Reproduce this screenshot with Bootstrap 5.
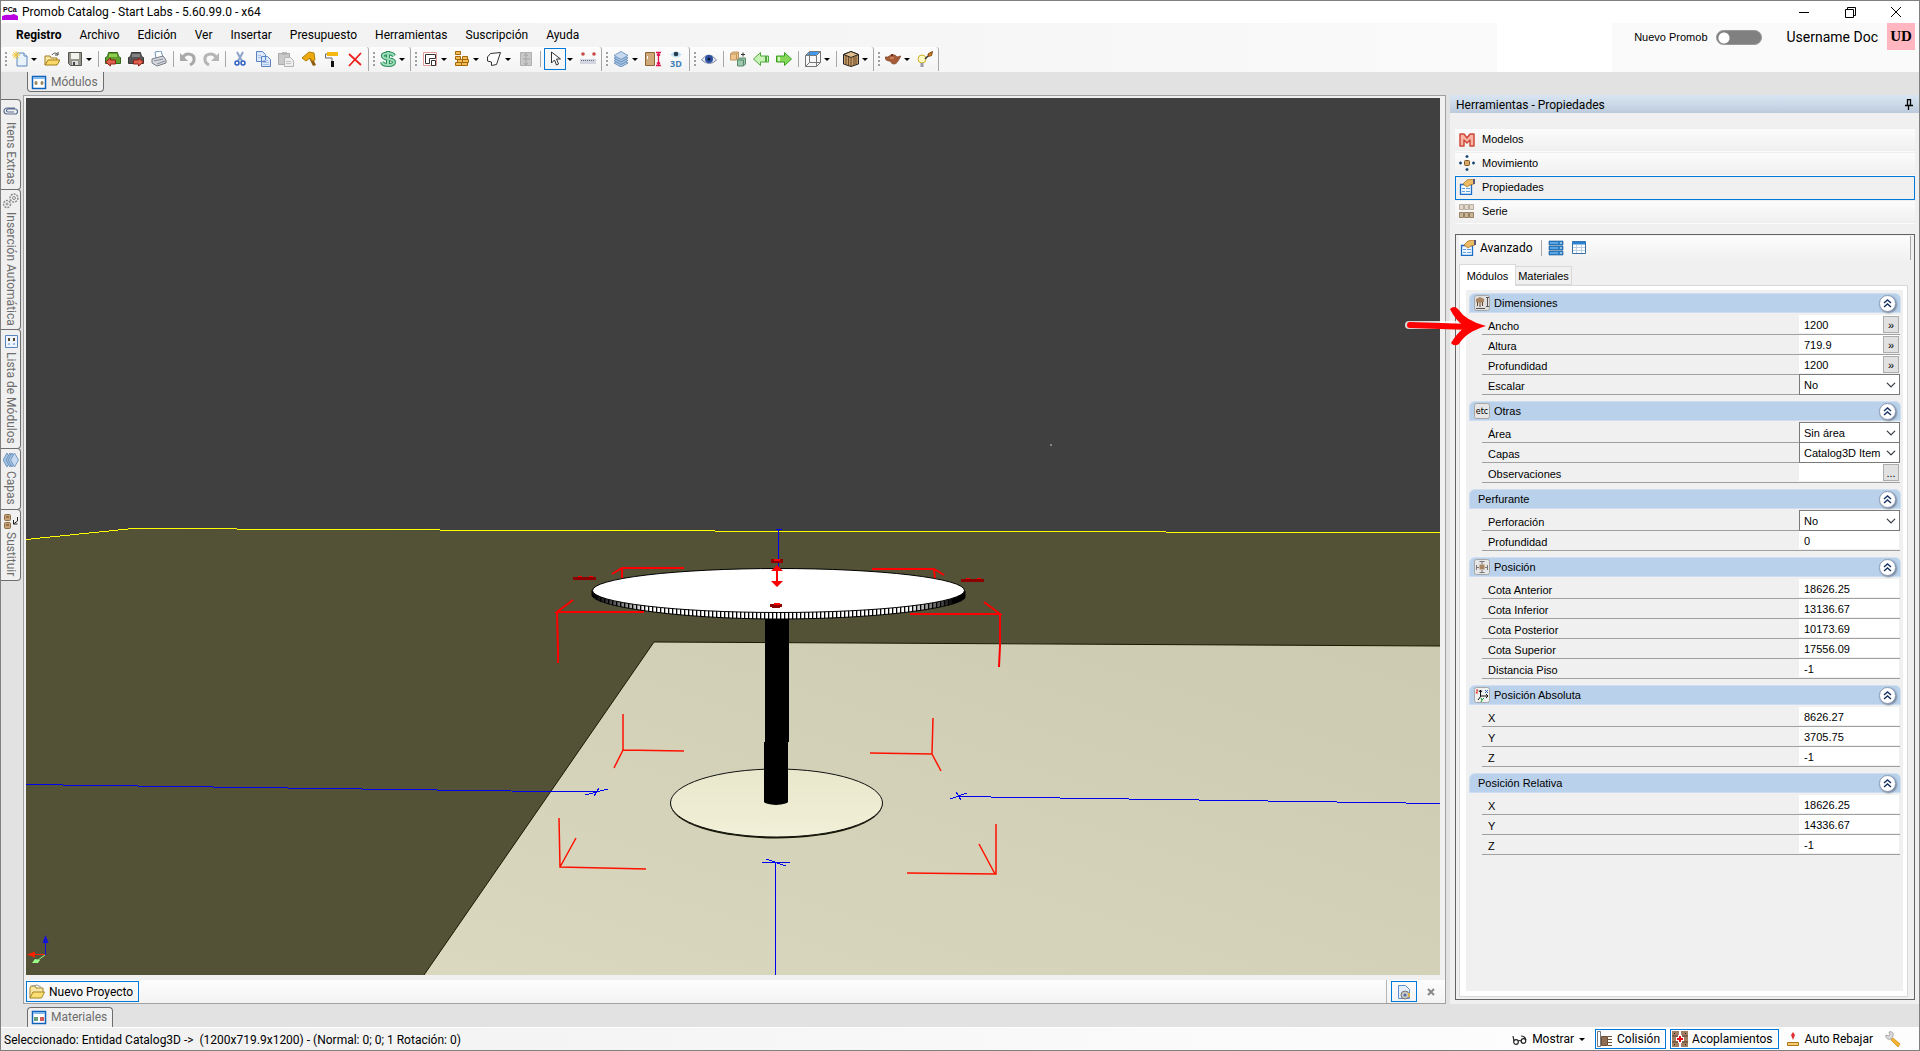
<!DOCTYPE html>
<html lang="es">
<head>
<meta charset="utf-8">
<meta name="viewport" content="width=device-width, initial-scale=1">
<title>Promob Catalog - Start Labs</title>
<link href="https://cdn.jsdelivr.net/npm/bootstrap@5.3.0/dist/css/bootstrap.min.css" rel="stylesheet">
<style>
:root{--ui:Roboto,"Open Sans",sans-serif;--grid:"Liberation Sans",Arial,sans-serif;--accent:#0078d7}
body{font:12px/16px var(--ui);color:#000;background:#e2e2e2}
button{font:inherit;color:inherit}
.shell{min-height:100vh;border:1px solid #808080}
.titlebar{height:22px;background:#fff;padding-left:1px}
.win-btn{width:46px;height:22px;border:0;background:none;padding:0}
.top-area{background:linear-gradient(90deg,#f0f0f0,#fafafa 78%,#fff 78%,#fff 84%,#fafafa 84%)}
.menubar{height:24px;padding-left:6px}
.menubar a{color:#000;text-decoration:none;padding:0 9px}
.toolbar{height:25px;padding-bottom:1px}
.toolgroup{height:24px;background:linear-gradient(#fdfdfd,#f3f3f3);border-right:1px solid #a8a8a8;border-radius:3px 3px 0 0;padding-right:1px}
.toolgroup .grip{width:8px;height:16px;background:radial-gradient(circle,#a0a0a0 1px,transparent 1px) 0 0/4px 4px repeat-y;background-position:3px 0}
.tb{width:23px;height:22px;padding:0 4px 0 3px;border:0;background:none}
.tb-split{width:21px;padding-right:2px}
.tb-caret{width:11px;height:22px;padding:0;border:0;background:none}
.tb-caret::after,.drop-mark::after{content:"";display:block;width:0;margin-left:1px;border:3px solid transparent;border-top-color:#000;border-bottom:0}
.tb svg,.ico{width:16px;height:16px;display:block;flex:none}
.tb-on{border:1px solid var(--accent);width:22px;padding:0 2px}
.bar-sep{width:1px;height:16px;background:#a8a8a8;margin:0 3px 0 2px}
.promo{font:11px/16px var(--grid);height:28px}
.account{height:49px;padding-right:4px}
.switch{width:46px;height:15px;border-radius:8px;appearance:none;background:radial-gradient(circle at 7px 7px,#fff 5px,transparent 6px),gray;border:1px solid #999;margin:0}
.avatar-box{width:28px;height:27px;background:#ffb6c1;font:bold 15px/27px "Liberation Serif",serif}
.user-name{font:14px/18px Roboto,sans-serif;margin:0 9px 0 25px;height:28px}
.dock-tab{color:#6d6d6d;background:#f0f0f0;border:1px solid #6e6e6e;gap:4px;height:20px;padding:0 5px 0 3px}
.dock-top{border-top:0;border-radius:0 0 4px 4px}
.dock-bottom{border-bottom:0;border-radius:4px 4px 0 0;padding-bottom:2px}
.dock-row{padding:3px 0 0 4px}
.side-strip{width:22px;padding-top:3px}
.side-tab{writing-mode:vertical-rl;width:20px;border:1px solid #6e6e6e;border-left:0;border-radius:0 4px 4px 0;background:#f0f0f0;color:#6d6d6d;padding:3px 0 4px;gap:3px;margin-bottom:-1px;line-height:18px}
.work-row{margin-top:3px}
.stage{border:1px solid #a0a0a0;background:#f0f0f0;padding:2px 5px 0 2px;margin-right:4px;min-width:0}
.canvas3d{flex:1 1 0;min-height:300px;position:relative;background:#404040}
.canvas3d svg{position:absolute;width:100%;height:100%}
.projbar{height:23px;background:linear-gradient(#fdfdfd,#f3f3f3);margin-top:5px;margin-right:-5px}
.framed{border:1px solid var(--accent);background:none;padding:0 5px 0 2px;gap:4px;height:21px}
.closer{border-left:1px solid #b4b4b4;padding-left:4px}
.close-btn{border:0;background:none;padding:0 10px}
.tools{width:469px;background:#f0f0f0}
.tools-head{height:18px;padding:1px 6px 0;background:linear-gradient(#d9e5f2,#bccbdc)}
.tool-list{margin:15px 4px 10px 5px;font:12px/16px var(--grid)}
.tool-list button{height:24px;width:100%;border:1px solid transparent;padding:0 3px 2px;gap:7px;background:linear-gradient(#fcfcfc,#efefef);font-size:11px}
.tool-list .chosen{border-color:var(--accent);background:#f0f0f0}
.propbox{margin:0 4px 4px 5px;border:1px solid #646464;padding:1px 6px 2px 3px;flex:1}
.propbar{height:24px;background:linear-gradient(#fdfdfd,#f1f1f1);padding-left:1px;margin-right:-3px;border-right:1px solid #a8a8a8}
.tabrow{height:22px;margin-top:3px;font-family:var(--grid)}
.tabrow button{border:1px solid #d9d9d9;background:#f0f0f0;padding:0;width:56px;height:19px;font-size:11px;border-left:0}
.tabrow .here{background:#fff;border-left:1px solid #d9d9d9;border-bottom:0;height:22px;width:57px;margin-bottom:-1px;position:relative}
.tabbody{background:#fff;border:1px solid #d9d9d9;padding:4px 4px 5px 6px;flex:1}
.propgrid{background:#f0f0f0;height:100%;padding:3px 2px 0 3px;font:11px/16px var(--grid)}
.sec{height:20px;background:#b9d1ea;border:1px solid #cddff1;border-radius:6px 6px 0 0;padding:0 4px 0 8px;margin:6px 0 2px}
.propgrid .sec:first-child{margin-top:0}
.sec.iconed{padding-left:4px}
.sec h2{font:11px/16px var(--grid);margin:0}
.sec.iconed h2{margin-left:4px}
.fold{width:17px;height:17px;border-radius:50%;border:1px solid #8e9cb4;background:#fff;padding:0;box-shadow:1px 1px 2px #6f7f96}
.fold svg{display:block;margin:3px}
.prow{height:20px;border-bottom:1px solid #a0a0a0;margin:0 1px 0 13px;padding-left:6px}
.prow label{flex:1;padding-top:3px}
.prow .slot{width:101px;height:19px;background:#fff;border-bottom:1px solid #f0f0f0;border-right:1px solid #f0f0f0}
.prow input{border:0;background:none;min-width:0;flex:1;padding:1px 0 0 5px;outline:0;height:18px}
.prow .slot button{width:16px;height:17px;background:#e1e1e1;border:1px solid #adadad;padding:0;margin-top:1px;line-height:14px}
.prow .form-select{width:101px;height:21px;margin-top:-1px;border:1px solid #7a7a7a;border-radius:0;padding:0 18px 0 4px;font:11px/16px var(--grid);color:#000;background-color:#fff;background-position:right 3px center;background-size:10px 10px}
.pointer-arrow{position:absolute;left:-45px;top:211px;width:82px;height:40px;z-index:3;pointer-events:none}
.statusbar{height:23px;background:linear-gradient(90deg,#f0f0f0,#fdfdfd 80%);border-top:1px solid #fff;padding:0 4px 0 3px}
.status-text{padding-top:2px}
.status-btn{border:1px solid transparent;background:none;height:20px;padding:0 5px 0 1px;gap:4px}
.status-btn.lit{border-color:var(--accent)}
</style>
<script src="https://cdn.jsdelivr.net/npm/bootstrap@5.3.0/dist/js/bootstrap.bundle.min.js"></script>
</head>
<body>
<svg class="d-none" aria-hidden="true">
<symbol id="i-new" viewBox="0 0 16 16"><path d="M5 2h7l3 3v10H5z" fill="#e9f2ff" stroke="#5d86bb"/><path d="M12 2v3h3" fill="#fff" stroke="#5d86bb"/><path d="M4 0v8M0 4h8M1 1l6 6M7 1L1 7" stroke="#f2c230"/></symbol>
<symbol id="i-open" viewBox="0 0 16 16"><path d="M1 14V5h5l1 2h6v3" fill="#fbe8a4" stroke="#a17c1e"/><path d="M1 14l3-5h12l-3 5z" fill="#fcd869" stroke="#a17c1e"/><path d="M8 4c2-3 5-2 6 0m0-3v3h-3" fill="none" stroke="#444"/></symbol>
<symbol id="i-save" viewBox="0 0 16 16"><path d="M1.500 1.500h13v13h-11l-2-2z" fill="#96968e" stroke="#55554e"/><path d="M4 2h8v6H4z" fill="#f3f3ee"/><path d="M5 10h6v4H5z" fill="#ddd"/><path d="M6 11h2v3H6z" fill="#444"/></symbol>
<symbol id="i-armg" viewBox="0 0 16 16"><path d="M3.500 1.500h9l1 4 2 1v6H.5v-6l2-1z" fill="#5f9f2e" stroke="#34671a"/><path d="M4 3h8v3H4z" fill="#8fce50"/><path d="M.5 11l5-4v2h5v4h-5v2z" fill="#e2604f" stroke="#8f2217"/></symbol>
<symbol id="i-armk" viewBox="0 0 16 16"><path d="M3.500 1.500h9l1 4 2 1v6H.5v-6l2-1z" fill="#555" stroke="#3a3a3a"/><path d="M4 3h8v3H4z" fill="#828282"/><path d="M15.500 11l-5-4v2h-5v4h5v2z" fill="#e2604f" stroke="#8f2217"/></symbol>
<symbol id="i-print" viewBox="0 0 16 16"><path d="M4 1l6-1 2 6-7 1z" fill="#fff" stroke="#6f94c0"/><path d="M1 8l11-3 3 4v3l-9 3-5-3z" fill="#d5d8df" stroke="#777d88"/><path d="M3 10l9-2M6 13l8-3" stroke="#858b96"/></symbol>
<symbol id="i-undo" viewBox="0 0 16 16"><path d="M3 6c4-5 12-3 11 3 0 2-2 4-4 5" fill="none" stroke="#a9a9a9" stroke-width="3"/><path d="M0 2v8h8z" fill="#a9a9a9"/></symbol>
<symbol id="i-redo" viewBox="0 0 16 16"><path d="M13 6C9 1 1 3 2 9c0 2 2 4 4 5" fill="none" stroke="#b5b5b5" stroke-width="3"/><path d="M16 2v8H8z" fill="#b5b5b5"/></symbol>
<symbol id="i-cut" viewBox="0 0 16 16"><path d="M5 1l5 9M11 1L6 10" stroke="#8ba3c9" stroke-width="2"/><circle cx="5" cy="12" r="2" fill="none" stroke="#2f5fc4" stroke-width="1.500"/><circle cx="11" cy="12" r="2" fill="none" stroke="#2f5fc4" stroke-width="1.500"/></symbol>
<symbol id="i-copy" viewBox="0 0 16 16"><g fill="#dce9fd" stroke="#5a82c4"><path d="M1.500.5h6l3 3v7h-9zM6.500 5.500h6l3 3v7h-9z"/></g><path d="M8 9.500h5M8 11.500h6M8 13.500h6M3 4.500h3M3 6.500h3" stroke="#a9c1ea"/></symbol>
<symbol id="i-paste" viewBox="0 0 16 16"><path d="M.5 2.500h11v11H.5z" fill="#cacaca" stroke="#aaa"/><path d="M4 1h5v3H4z" fill="#b4b4b4"/><path d="M6.500 6.500h6l3 3v6h-9z" fill="#eee" stroke="#b4b4b4"/><path d="M8 10.500h5M8 12.500h5" stroke="#c4c4c4"/></symbol>
<symbol id="i-hammer" viewBox="0 0 16 16"><path d="M8 7l4 8 3-1-4-8" fill="#8f5c12"/><path d="M1 7l7-6 5 1 1 7-3 1-2-3-4 3z" fill="#eba90f" stroke="#b57f08"/></symbol>
<symbol id="i-roller" viewBox="0 0 16 16"><path d="M3 1h11v4H3z" fill="#f5b712"/><path d="M3 3H1.500v4H8v3" fill="none" stroke="#666"/><path d="M7 10h3v6H7z" fill="#111"/></symbol>
<symbol id="i-del" viewBox="0 0 16 16"><path d="M2 3l12 11M14 2L2 15" stroke="#ee1f1f" stroke-width="1.800"/></symbol>
<symbol id="i-dollar" viewBox="0 0 16 16"><path d="M14 5c-2-4-12-3-11 0 0 4 11 2 11 6 0 4-11 4-12 0M8 0v16" fill="none" stroke="#2d8c5b" stroke-width="4"/><path d="M14 5c-2-4-12-3-11 0 0 4 11 2 11 6 0 4-11 4-12 0M8 1v14" fill="none" stroke="#9adfb8" stroke-width="2"/></symbol>
<symbol id="i-wall" viewBox="0 0 16 16"><path d="M1.500 1.500h13v13h-13z" fill="#fff" stroke="#e79a9a"/><path d="M3.500 12.500v-9h10v4h-6v5zM9.500 9.500h4v5h-4z" fill="#fff" stroke="#333"/></symbol>
<symbol id="i-brick" viewBox="0 0 16 16"><g fill="#f2bd55" stroke="#a5670c"><path d="M1.500.5h5v3h-5zM1.500 5.500h5v3h-5zM8.500 5.500h5v3h-5zM3.500 8.500h5v3h-5zM8.500 8.500h6v3h-6zM1.500 11.500h6v3h-6zM7.500 11.500h6v3h-6z"/></g></symbol>
<symbol id="i-poly" viewBox="0 0 16 16"><path d="M4.500 2.500l10-1-4 12-5 1V11l-4-1V6z" fill="#fff" stroke="#333"/></symbol>
<symbol id="i-gdoor" viewBox="0 0 16 16"><path d="M2.500 1.500h11v13h-11z" fill="#c8c8c8" stroke="#b0b0b0"/><path d="M8 2v12M5 8h7M6 5l2-2 2 2M6 12l2 2 2-2" stroke="#a4a4a4" fill="none"/></symbol>
<symbol id="i-cursor" viewBox="0 0 16 16"><path d="M4.500 1v11l3-3 2 5 2-1-2-5h4z" fill="#fff" stroke="#333"/></symbol>
<symbol id="i-measure" viewBox="0 0 16 16"><circle cx="3" cy="3" r="1.800" fill="#c94848"/><circle cx="14" cy="3" r="1.800" fill="#c94848"/><path d="M0 8h16v5H0z" fill="#d3d6e0"/><path d="M1 9.500h14" stroke="#666d86" stroke-dasharray="1 1"/></symbol>
<symbol id="i-layers" viewBox="0 0 16 16"><g fill="#a6c3e3" stroke="#5f88b5" stroke-width=".8"><path d="M8 8l7 4-7 4-7-4z"/><path d="M8 5.500l7 4-7 4-7-4z"/><path d="M8 3l7 4-7 4-7-4z"/><path d="M8 .5l7 4-7 4-7-4z" fill="#c6d9ee"/></g></symbol>
<symbol id="i-door" viewBox="0 0 16 16"><path d="M.5 1.500h9v13h-9z" fill="#d0a97a" stroke="#8c6436"/><path d="M2.500 5v3" stroke="#fff"/><path d="M11 1.500h5M11 14.500h5M13.500 2v12M12 4.500l1.500-2 1.500 2M12 11.500l1.500 2 1.500-2" fill="none" stroke="#dc1450" stroke-width="1.300"/></symbol>
<symbol id="i-eye3d" viewBox="0 0 16 16"><path d="M2 3.500q6-6 12 0-6 6-12 0z" fill="#c4e2f4"/><circle cx="8" cy="3" r="2.300" fill="#23394c"/><text x="8" y="16" text-anchor="middle" font-family="Open Sans" font-weight="700" font-size="9" fill="#4180b4">3D</text></symbol>
<symbol id="i-eye" viewBox="0 0 16 16"><path d="M.5 9q7-10 15 0-7 7-15 0z" fill="#e8edf6" stroke="#7a83a0"/><circle cx="8" cy="8" r="4" fill="#2a50a0"/><circle cx="8" cy="8" r="1.500" fill="#0b1533"/></symbol>
<symbol id="i-boxes" viewBox="0 0 16 16"><path d="M.5 3l2-2h6v6l-2 2h-6z" fill="#eec48c" stroke="#c09560"/><path d="M.5 3h6v6M6.500 3l2-2" fill="none" stroke="#c09560"/><path d="M7.500 9l2-2h6v6l-2 2h-6z" fill="#9fc7ae" stroke="#598a6b"/><path d="M7.500 9h6v6" fill="none" stroke="#598a6b"/><path d="M11 3.500h4M13 1.500v4" stroke="#333"/></symbol>
<symbol id="i-left" viewBox="0 0 16 16"><path d="M.5 8l7-6.500V5h8v6h-8v3.500z" fill="#c9f3b6" stroke="#4fa63c"/><path d="M13 5v6" stroke="#4fa63c" stroke-width="2"/></symbol>
<symbol id="i-right" viewBox="0 0 16 16"><path d="M15.500 8l-7-6.500V5h-8v6h8v3.500z" fill="#86d956" stroke="#3b9d27"/><path d="M3 6v4" stroke="#d9f7c9" stroke-width="2"/></symbol>
<symbol id="i-cube" viewBox="0 0 16 16"><path d="M5 .5h10l-4 4H1z" fill="#3d9bf0"/><path d="M.5 4.500l4-4h11v11l-4 4H.5zM.5 4.500h11v11M11.500 4.500l4-4M4.500 1v10.500h11M4.500 11.500l-4 4" fill="none" stroke="#777"/></symbol>
<symbol id="i-wood" viewBox="0 0 16 16"><path d="M8 .5l7.500 3v9.500L8 15.500.5 13V3.500z" fill="#c49a6b" stroke="#222"/><path d="M.5 3.500l7.500 3 7.500-3L8 .5z" fill="#e0bd8e" stroke="#222"/><path d="M8 6v10M3 5v9M5.500 6v8M11 6v8M13 5v8" stroke="#6b4a25"/></symbol>
<symbol id="i-tea" viewBox="0 0 16 16"><path d="M3 6c3-3 7-3 9 0l4-1-3 5c-2 4-6 4-8 0C1 10 0 8 0 6z" fill="#a75b36" stroke="#7e4428" stroke-width=".7"/><path d="M6 3h2v2H6z" fill="#6e331a"/><path d="M5 7h4" stroke="#e6a581"/></symbol>
<symbol id="i-lamp" viewBox="0 0 16 16"><circle cx="5" cy="8" r="4" fill="#fff9c3" stroke="#d1ae2a"/><path d="M3.500 12h3v4h-3z" fill="#99a"/><path d="M8 8l3-3" stroke="#333" stroke-width="1.500"/><path d="M11 3l4.500-2.500-1 4-3 1z" fill="#dd811f" stroke="#7c420a"/></symbol>
<symbol id="i-modt" viewBox="0 0 16 16"><path d="M1.500 2.500h13v12h-13z" fill="#fff" stroke="#0c62ba" stroke-width="1.500"/><path d="M2 4h12" stroke="#86b9eb" stroke-width="2"/><ellipse cx="5" cy="9" rx="1.500" ry="2" fill="#9a8558"/><ellipse cx="11" cy="9" rx="1.500" ry="2" fill="#9a8558"/></symbol>
<symbol id="i-matt" viewBox="0 0 16 16"><path d="M1.500 2.500h13v12h-13z" fill="#fff" stroke="#0c62ba" stroke-width="1.500"/><path d="M2 4h12" stroke="#86b9eb" stroke-width="2"/><path d="M3 8h4v4H3z" fill="#69a07a"/><path d="M9 8h4v4H9z" fill="#cf5a5a"/></symbol>
<symbol id="i-clip" viewBox="0 0 16 16"><path d="M12 5H4a3 3 0 0 0 0 6h8a2 2 0 0 0 0-5H5a1 1 0 0 0 0 3h6" fill="none" stroke="#5a6f92" stroke-width="1.200"/></symbol>
<symbol id="i-gears" viewBox="0 0 16 16"><g fill="none" stroke="#8b8b8b"><circle cx="11" cy="5" r="4" stroke-width="1.500" stroke-dasharray="2 1"/><circle cx="11" cy="5" r="1.500"/><circle cx="4" cy="11" r="3.500" stroke-width="1.500" stroke-dasharray="2 1"/><circle cx="4" cy="11" r="1"/></g></symbol>
<symbol id="i-list" viewBox="0 0 16 16"><path d="M2.500 2.500h12v12h-12z" fill="#eef5ff" stroke="#5a85c0"/><path d="M5 5h2v3H5zM10 5h2v3h-2z" fill="#5d492c"/><path d="M5 11h2M10 11h2" stroke="#5a85c0"/></symbol>
<symbol id="i-sidelayers" viewBox="0 0 16 16"><g fill="#a6c3e3" stroke="#5f88b5" stroke-width=".8"><path d="M8 8l-4-7-4 7 4 7z"/><path d="M11 8L7 1 3 8l4 7z"/><path d="M13 8L9 1 5 8l4 7z"/><path d="M15.500 8l-4-7-4 7 4 7z" fill="#c6d9ee"/></g></symbol>
<symbol id="i-swap" viewBox="0 0 16 16"><g fill="#c9a276" stroke="#8f6d45"><rect x="1.500" y="1.500" width="6" height="6" rx="1"/><rect x="1.500" y="9.500" width="6" height="6" rx="1"/></g><path d="M3 4h3M3 12h3" stroke="#5b4326"/><path d="M14.500 4v4l-4 3m0-4v4h4" fill="none" stroke="#222"/></symbol>
<symbol id="i-m" viewBox="0 0 16 16"><path d="M1 15V3h4l3 4 3-4h4v12h-4V9l-3 3-3-3v6z" fill="#f7b5a6" stroke="#cf4a3c" stroke-width="1.500" stroke-linejoin="round"/></symbol>
<symbol id="i-move" viewBox="0 0 16 16"><rect x="5.500" y="5.500" width="5" height="5" rx="1" fill="#d9a766" stroke="#7c5526"/><path d="M8 0v3M6.500 1.500h3M8 13v3M6.500 14.500h3M0 8h3M1.500 6.500v3M13 8h3M14.500 6.500v3" stroke="#1c4673" stroke-width="1.300"/></symbol>
<symbol id="i-prop" viewBox="0 0 16 16"><path d="M1.500 5.500h11v10h-11z" fill="#f2f8ff" stroke="#1a6cc8" stroke-width="1.300"/><path d="M3 9.500h3M3 12.500h3M7 9.500h4M7 12.500h4" stroke="#61a1df"/><path d="M4 5l4-4 6-1 1 1v4l-4 1-3 2z" fill="#ecbb62" stroke="#a06c1c" stroke-width=".7"/><path d="M14 0h2v5h-2z" fill="#5a5572"/></symbol>
<symbol id="i-serie" viewBox="0 0 16 16"><g fill="#e0d8cd" stroke="#b9ad9e"><path d="M.5 1.500h4v5h-4zM5.500 1.500h4v5h-4zM10.500 1.500h4v5h-4z"/></g><g fill="#c9b698" stroke="#957e60"><path d="M.5 9.500h4v5h-4zM5.500 9.500h4v5h-4zM10.500 9.500h4v5h-4z"/></g></symbol>
<symbol id="i-rows" viewBox="0 0 16 16"><path d="M1 1h14v4H1zM1 6h14v4H1zM1 11h14v4H1z" fill="#2a82ce" stroke="#1f5c92" stroke-width=".6"/><path d="M2 3h8M2 8h8M2 13h8" stroke="#8ec6f5"/><path d="M12 3h2M12 8h2M12 13h2" stroke="#fff"/></symbol>
<symbol id="i-table" viewBox="0 0 16 16"><path d="M1.500 1.500h13v12h-13z" fill="#fff" stroke="#3a6ea0"/><path d="M1.500 1.500h13v3h-13z" fill="#2a82ce"/><path d="M5.500 5v8M10.500 5v8M2 7.500h12M2 10.500h12" stroke="#b9cfe3"/></symbol>
<symbol id="i-dim" viewBox="0 0 16 16"><rect x=".5" y=".5" width="15" height="15" rx="2" fill="#dedede" stroke="#a6a6a6"/><path d="M2 4l4-2 4 2v3l-4 1-4-1z" fill="#a98663"/><path d="M3.500 7v4M6 8v4M8.500 7v4" stroke="#65472a"/><path d="M2 13.500h9M13.500 3v8M12 2.500h3M12 11.500h3" stroke="#555"/></symbol>
<symbol id="i-etc" viewBox="0 0 16 16"><rect x=".5" y=".5" width="15" height="15" rx="2" fill="#e6e6e6" stroke="#a6a6a6"/><text x="8" y="11" text-anchor="middle" font-family="DejaVu Sans" font-size="8" fill="#000">etc</text></symbol>
<symbol id="i-pos" viewBox="0 0 16 16"><rect x=".5" y=".5" width="15" height="15" rx="2" fill="#e6e6e6" stroke="#a6a6a6"/><rect x="5.500" y="5.500" width="5" height="5" fill="#a98663"/><path d="M5.500 2.500h5M8 3v2M5.500 13.500h5M8 11v2M2.500 6v5M3 8.500h2M13.500 6v5M11 8.500h2" stroke="#777"/></symbol>
<symbol id="i-axes" viewBox="0 0 16 16"><rect x=".5" y=".5" width="15" height="15" rx="2" fill="#f0f0f0" stroke="#a6a6a6"/><path d="M6.500 3v6H14M7 9l-3 4M5 5l1.500-2L8 5M12 7l2 2-2 2" fill="none" stroke="#111"/><path d="M2 3h2L2 6h2" stroke="#d22" fill="none"/><path d="M11 3l3 3M14 3l-3 3" stroke="#2869b0"/><path d="M7 11l1 2 2-2M8 13l-1 2" stroke="#1a9a2c" fill="none"/></symbol>
<symbol id="i-up" viewBox="0 0 9 9"><path d="M1 4l3.500-3L8 4M1 8l3.500-3L8 8" fill="none" stroke="#1c3566" stroke-width="1.500"/></symbol>
<symbol id="i-folder" viewBox="0 0 16 16"><path d="M1 14V4l1-2h4l1 2h7v4" fill="#f8e7a5" stroke="#a38527"/><path d="M3 2l5-1 4 2" fill="none" stroke="#999"/><path d="M1 14l3-6h11.500l-3 6z" fill="#fadf72" stroke="#a38527"/></symbol>
<symbol id="i-doc" viewBox="0 0 16 16"><path d="M2.500 1.500h7l4 4v9h-11z" fill="#e6f0fc" stroke="#5b8fcf"/><circle cx="9" cy="11" r="4" fill="#c7c7c7" stroke="#777"/><circle cx="9" cy="11" r="1.500" fill="#556fa3"/><path d="M13 9v4" stroke="#dbb24a" stroke-width="2"/></symbol>
<symbol id="i-glass" viewBox="0 0 16 16"><g fill="none" stroke="#222" stroke-width="1.200"><circle cx="4" cy="11" r="2.300"/><circle cx="11.500" cy="10" r="2.300"/><path d="M6.300 10q1.500-1 3 0M1 5l1 5M9 5q4 0 5 4"/></g></symbol>
<symbol id="i-col" viewBox="0 0 16 16"><path d="M.5.500h3v15h-3z" fill="#fff" stroke="#777"/><path d="M4.500 5.500h6v9h-6z" fill="#8e6d52" stroke="#6d4f36"/><path d="M11 5.500h4M11 8.500h4M11 11.500h4M11 14.500h4" stroke="#6d4f36"/></symbol>
<symbol id="i-aco" viewBox="0 0 16 16"><path d="M0 0h7v16H0zM9 0h7v16H9z" fill="#a17f62"/><path d="M0 5h7M9 5h7M0 11h7M9 11h7" stroke="#5b4029"/><path d="M2 2.500h1M13 2.500h1M2 13.500h1M13 13.500h1" stroke="#222"/><path d="M8 4v8M4 8h8" stroke="#fff" stroke-width="4"/><path d="M8 5v6M5 8h6" stroke="#e60f0f" stroke-width="2"/></symbol>
<symbol id="i-reb" viewBox="0 0 16 16"><path d="M8 1l2 3-2 5-2-5z" fill="#d33"/><path d="M2.500 11.500h11v3h-11z" fill="#f7cb69" stroke="#a9771f"/></symbol>
<symbol id="i-wrench" viewBox="0 0 16 16"><path d="M1 4l3 1 1-1-1-3c3-1 5 1 4 4L6 8C3 9 0 7 1 4z" fill="#dcdcdc" stroke="#999" stroke-width=".8"/><path d="M8 7l7 6-2 3-7-7z" fill="#f3b531" stroke="#cf8f1c" stroke-width=".8"/></symbol>
</svg>

<div class="shell d-flex flex-column">
<header>
  <div class="titlebar d-flex align-items-center">
    <svg class="ico" viewBox="0 0 16 16" aria-hidden="true"><path d="M0 12q5-2 8-1l4-1 4 2v4H0z" fill="#b800e0"/><text x="1" y="8" font-family="Liberation Sans" font-weight="700" font-size="7">PCa</text></svg>
    <span class="ms-1 flex-grow-1">Promob Catalog - Start Labs - 5.60.99.0 - x64</span>
    <button class="win-btn" aria-label="Minimizar"><svg width="11" height="11"><path d="M0 5.500h10" stroke="#000"/></svg></button>
    <button class="win-btn" aria-label="Restaurar"><svg width="11" height="11"><path d="M.5 2.500h8v8h-8zM2.500 2.500v-2h8v8h-2" fill="none" stroke="#000"/></svg></button>
    <button class="win-btn" aria-label="Cerrar"><svg width="11" height="11"><path d="M0 0l10 10M10 0L0 10" stroke="#000"/></svg></button>
  </div>
  <div class="top-area d-flex justify-content-between">
    <div>
      <nav class="menubar d-flex align-items-center">
        <a href="#" class="fw-bold">Registro</a><a href="#">Archivo</a><a href="#">Edición</a><a href="#">Ver</a><a href="#">Insertar</a><a href="#">Presupuesto</a><a href="#">Herramientas</a><a href="#">Suscripción</a><a href="#">Ayuda</a>
      </nav>
      <div class="toolbar d-flex" role="toolbar" id="mainTools"></div>
    </div>
    <div class="account d-flex">
      <div class="d-flex align-items-center gap-2 promo"><label for="sw">Nuevo Promob</label><input type="checkbox" class="switch" id="sw" role="switch"></div>
      <div class="user-name d-flex align-items-center">Username Doc</div>
      <div class="avatar-box text-center">UD</div>
    </div>
  </div>
</header>

<div class="d-flex flex-grow-1">
  <aside class="side-strip mt-4 flex-shrink-0">
    <button class="side-tab d-flex align-items-center"><svg class="ico"><use href="#i-clip"/></svg>Itens Extras</button>
    <button class="side-tab d-flex align-items-center"><svg class="ico"><use href="#i-gears"/></svg>Inserción Automática</button>
    <button class="side-tab d-flex align-items-center"><svg class="ico"><use href="#i-list"/></svg>Lista de Módulos</button>
    <button class="side-tab d-flex align-items-center"><svg class="ico"><use href="#i-sidelayers"/></svg>Capas</button>
    <button class="side-tab d-flex align-items-center"><svg class="ico"><use href="#i-swap"/></svg>Sustituir</button>
  </aside>
  <div class="flex-grow-1 d-flex flex-column">
    <div class="ps-1"><button class="dock-tab dock-top d-flex align-items-center"><svg class="ico"><use href="#i-modt"/></svg>Módulos</button></div>
    <div class="work-row d-flex flex-grow-1">
      <main class="stage flex-grow-1 d-flex flex-column">
        <div class="canvas3d">
          <svg viewBox="26 98 1414 877" preserveAspectRatio="xMidYMid slice" role="img" aria-label="Vista 3D de la mesa">
            <defs><linearGradient id="gFloor" x1="0" y1="1" x2="1" y2="0"><stop offset="0" stop-color="#dad9c0"/><stop offset="1" stop-color="#cccbb1"/></linearGradient>
            <pattern id="hatch" width="4" height="10" patternUnits="userSpaceOnUse"><path fill="#fff" d="M0 0h4v10H0z"/><path fill="#000" d="M0 0h1.300v10H0z"/></pattern>
            <linearGradient id="rim"><stop offset="0" stop-color="#000"/><stop offset=".04" stop-color="#000" stop-opacity=".8"/><stop offset=".15" stop-color="#000" stop-opacity="0"/><stop offset=".85" stop-color="#000" stop-opacity="0"/><stop offset=".97" stop-color="#000"/></linearGradient>
            <linearGradient id="base" x2="0" y2="1"><stop offset="0" stop-color="#e9e8cc"/><stop offset="1" stop-color="#f1f0d8"/></linearGradient></defs>
            <path d="M26 98h1414v877H26z" fill="#404040"/>
            <path d="M26 540l107-11 407 2 342 .5 558 1v443H26z" fill="#535237"/>
            <path d="M26 539.500l107-11 407 2 342 1 558 1" fill="none" stroke="#ff0" shape-rendering="crispEdges"/>
            <path d="M654 642l786 4v329H424z" fill="url(#gFloor)"/>
            <path d="M424 975l230-333 786 4" fill="none" stroke="#1a1900"/>
            <g fill="none" stroke="#00e" shape-rendering="crispEdges"><path d="M778.500 529v40M776 529.500h6M26 784.500l522 7M540 791.500h58M585 795l23-6M594 796l5-8M950 799l17-6M956 792l5 8M956 796.500l484 7M775.500 862v113M762 862.500h28M766 859l20 7"/></g>
            <g fill="none" stroke="#f00" stroke-width="2"><path d="M612 574l10-6h62M622 568v10M872 569h62l10 6M934 569l1 10"/></g>
            <ellipse cx="776.500" cy="804" rx="106" ry="34.500" fill="#191900"/>
            <ellipse cx="776.500" cy="803" rx="106" ry="34" fill="url(#base)" stroke="#111"/>
            <path d="M765 612h24v130h-1v60q-1 2-12 3-11-1-12-3v-60h1z" fill="#000"/>
            <path d="M592 590v5c0 11 85 24 187 24s186-12 186-22v-6z" fill="url(#hatch)"/>
            <path d="M592 590v5c0 11 85 24 187 24s186-12 186-22v-6z" fill="url(#rim)" stroke="#000"/>
            <ellipse cx="778.500" cy="590.500" rx="186" ry="22" fill="#fff" stroke="#000"/>
            <g fill="none" stroke="#f00" stroke-width="2"><path d="M573 600l-16 12h87M557 612l1 39v12M984 602l16 12h-90M1000 614v32l-1 21"/></g>
            <g fill="none" stroke="#f10" stroke-width="1.500"><path d="M623 714v36l61 1M623 750l-9 18M933 718l-1 36-62-1M932 754l9 17M559 818l1 49 86 2M560 867l16-29M996 824v50l-89-1M995 874l-16-30"/></g>
            <path d="M573 577h23v3h-23zM961 579h23v3h-23zM771 559h12v4h-12zM770 604h12v3h-2v1h-8v-1h-2z" fill="#8d0000"/>
            <path d="M777 565l6 6h-5v10h5l-6 6-6-6h5v-10h-5z" fill="#f00"/><path d="M774 559h6v2h-6zM774 603h6v2h-6zM578 576h4v1h-4zM589 576h4v1h-4zM966 578h4v1h-4zM977 578h4v1h-4z" fill="#f00"/>
            <path d="M1051 444v2" stroke="#ccc"/>
            <path d="M45.500 955V940" stroke="#11d"/><path d="M45.500 935l3 8h-6z" fill="#11d"/><path d="M45 954.500H32" stroke="#f20"/><path d="M27 954.500l8-3v6z" fill="#f20"/><path d="M45 955l-7 5" stroke="#9f8"/><path d="M32 963l3-4 5 1-2 3z" fill="#9f8"/>
          </svg>
        </div>
        <div class="projbar d-flex align-items-center">
          <button class="framed d-flex align-items-center"><svg class="ico"><use href="#i-folder"/></svg>Nuevo Proyecto</button>
          <div class="closer ms-auto h-100 d-flex align-items-center">
            <button class="framed px-1" aria-label="Ver documento"><svg class="ico"><use href="#i-doc"/></svg></button>
            <button class="close-btn" aria-label="Cerrar proyecto"><svg width="8" height="8" class="d-block"><path d="M1 1l6 6M7 1L1 7" stroke="#888" stroke-width="2"/></svg></button>
          </div>
        </div>
      </main>
      <aside class="tools d-flex flex-column position-relative">
        <div class="tools-head d-flex align-items-center justify-content-between">Herramientas - Propiedades
          <svg width="8" height="11" aria-hidden="true"><path d="M2.500 0v6M2 .5h4M5.500 0v6M0 6.500h8M3.500 7v4" stroke="#000" fill="none" stroke-width="1.300"/></svg></div>
        <div class="tool-list">
          <button class="d-flex align-items-center"><svg class="ico"><use href="#i-m"/></svg>Modelos</button>
          <button class="d-flex align-items-center"><svg class="ico"><use href="#i-move"/></svg>Movimiento</button>
          <button class="d-flex align-items-center chosen"><svg class="ico"><use href="#i-prop"/></svg>Propiedades</button>
          <button class="d-flex align-items-center"><svg class="ico"><use href="#i-serie"/></svg>Serie</button>
        </div>
        <div class="propbox d-flex flex-column">
          <div class="propbar d-flex align-items-center">
            <button class="border-0 bg-transparent d-flex p-0 gap-1"><svg class="ico"><use href="#i-prop"/></svg>Avanzado</button>
            <span class="bar-sep ms-2"></span>
            <button class="tb" aria-label="Lista"><svg><use href="#i-rows"/></svg></button>
            <button class="tb" aria-label="Tabla"><svg><use href="#i-table"/></svg></button>
          </div>
          <div class="tabrow d-flex align-items-end"><button class="here">Módulos</button><button>Materiales</button></div>
          <div class="tabbody"><div class="propgrid" id="props"></div></div>
        </div>
        <svg class="pointer-arrow" viewBox="0 0 82 40" aria-hidden="true"><path d="M4 19h46" stroke="#fff" stroke-width="8" stroke-linecap="round" stroke-opacity=".8"/><path d="M5 19l60 2" stroke="#f00" stroke-width="6" stroke-linecap="round"/><path d="M45 3q4-4 8 0 8 12 28 17-20 6-27 18-5 3-8-1 6-10 14-16Q50 14 45 3z" fill="#f00"/></svg>
      </aside>
    </div>
    <div class="dock-row"><button class="dock-tab dock-bottom d-flex align-items-center"><svg class="ico"><use href="#i-matt"/></svg>Materiales</button></div>
  </div>
</div>

<footer class="statusbar d-flex align-items-center">
  <span class="status-text flex-grow-1">Seleccionado: Entidad Catalog3D -&gt; &nbsp;(1200x719.9x1200) - (Normal: 0; 0; 1 Rotación: 0)</span>
  <div class="d-flex gap-1">
    <button class="status-btn d-flex align-items-center drop-mark"><svg class="ico"><use href="#i-glass"/></svg>Mostrar</button>
    <button class="status-btn lit d-flex align-items-center"><svg class="ico"><use href="#i-col"/></svg>Colisión</button>
    <button class="status-btn lit d-flex align-items-center"><svg class="ico"><use href="#i-aco"/></svg>Acoplamientos</button>
    <button class="status-btn d-flex align-items-center"><svg class="ico"><use href="#i-reb"/></svg>Auto Rebajar</button>
    <button class="status-btn d-flex align-items-center me-2" aria-label="Ajustes"><svg class="ico"><use href="#i-wrench"/></svg></button>
  </div>
</footer>
</div>
<script>
// "name+" adds a drop-down arrow, "name!" is the active tool, "|" is a divider
const groups = [
  "new+ open save+ | armg armk print | undo redo | cut copy paste hammer roller del",
  "dollar+", "wall+ brick+ poly+ gdoor | cursor!+ measure", "layers+ door eye3d",
  "eye | boxes left right | cube+ | wood+", "tea+ lamp"
];
mainTools.innerHTML = groups.map(g => '<div class="toolgroup d-flex align-items-center"><span class="grip"></span>' +
  g.split(" ").map(t => {
    if (t === "|") return '<span class="bar-sep"></span>';
    const n = t.replace(/[+!]/g, ""), split = t.includes("+");
    const cls = t.includes("!") ? " tb-on" : split ? " tb-split" : "";
    return `<button class="tb${cls}" aria-label="${n}"><svg><use href="#i-${n}"/></svg></button>` +
      (split ? `<button class="tb-caret" aria-label="${n} menú"></button>` : "");
  }).join("") + "</div>").join("");

// kinds: v = plain value, b = value with a button, s = drop-down
const sections = [
  ["Dimensiones", "dim", [["Ancho", "b", "1200", "»"], ["Altura", "b", "719.9", "»"], ["Profundidad", "b", "1200", "»"], ["Escalar", "s", "No"]]],
  ["Otras", "etc", [["Área", "s", "Sin área"], ["Capas", "s", "Catalog3D Item"], ["Observaciones", "b", "", "..."]]],
  ["Perfurante", "", [["Perforación", "s", "No"], ["Profundidad", "v", "0"]]],
  ["Posición", "pos", [["Cota Anterior", "v", "18626.25"], ["Cota Inferior", "v", "13136.67"], ["Cota Posterior", "v", "10173.69"], ["Cota Superior", "v", "17556.09"], ["Distancia Piso", "v", "-1"]]],
  ["Posición Absoluta", "axes", [["X", "v", "8626.27"], ["Y", "v", "3705.75"], ["Z", "v", "-1"]]],
  ["Posición Relativa", "", [["X", "v", "18626.25"], ["Y", "v", "14336.67"], ["Z", "v", "-1"]]]
];
props.innerHTML = sections.map(([title, icon, rows], s) =>
  `<div class="sec d-flex align-items-center ${icon ? "iconed" : ""}">${icon ? `<svg class="ico"><use href="#i-${icon}"/></svg>` : ""}<h2>${title}</h2><button class="fold ms-auto" aria-label="Contraer ${title}"><svg width="9" height="9"><use href="#i-up"/></svg></button></div>` +
  rows.map(([label, kind, value, mark], r) => {
    const id = `p${s}_${r}`;
    const field = kind === "s"
      ? `<select class="form-select" id="${id}"><option>${value}</option></select>`
      : `<div class="slot d-flex"><input id="${id}" value="${value}">${mark ? `<button aria-label="Editar ${label}">${mark}</button>` : ""}</div>`;
    return `<div class="prow d-flex"><label for="${id}">${label}</label>${field}</div>`;
  }).join("")).join("");
</script>
</body>
</html>
